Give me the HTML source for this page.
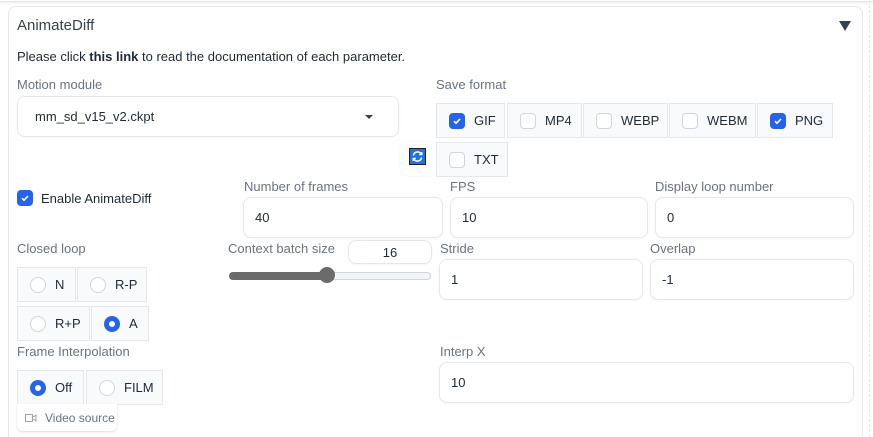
<!DOCTYPE html>
<html style="overflow:hidden;height:437px"><head><style>
*{box-sizing:border-box;margin:0;padding:0}
body{width:873px;height:437px;background:#fff;font-family:"Liberation Sans",sans-serif;position:relative;overflow:hidden;color:#1f2937}
.a{position:absolute}
.lbl{position:absolute;font-size:13px;color:#6b7280;white-space:nowrap}
.inp{position:absolute;border:1px solid #e5e7eb;border-radius:8px;background:#fff;font-size:13px;color:#1f2937;padding-left:11px;display:flex;align-items:center;box-shadow:0 1px 2px rgba(0,0,0,.04)}
.opt{position:absolute;border:1px solid #e5e7eb;background:#f9fafb;font-size:13px;display:flex;align-items:center;padding-left:12px;color:#1f2937}
.cb{width:16px;height:16px;border:1px solid #d1d5db;border-radius:4px;background:#fff;margin-right:9px;flex:none;display:inline-flex;align-items:center;justify-content:center}
.cb.on{background:#2563eb;border-color:#2563eb}
.rd{width:16px;height:16px;border:1px solid #d1d5db;border-radius:50%;background:#fff;margin-right:9px;flex:none}
.rd.on{border:5px solid #2563eb}
</style></head><body>
<div class="a" style="left:0;top:-10px;width:873px;height:12px;border-bottom:1px solid #e5e7eb;box-shadow:0 1px 3px rgba(0,0,0,.08)"></div>
<div class="a" style="left:869px;top:0;width:0;height:437px;border-left:1px dashed #e5e7eb"></div>
<div class="a" style="left:8px;top:6px;width:855px;height:431px;border:1px solid #e5e7eb;border-bottom:none;border-radius:8px 8px 0 0"></div>
<div class="a" style="left:17px;top:17px;font-size:15px;color:#374151">AnimateDiff</div>
<div class="a" style="left:839px;top:21px;width:0;height:0;border-left:6px solid transparent;border-right:6px solid transparent;border-top:10px solid #374151"></div>
<div class="a" style="left:17px;top:49px;font-size:13px;color:#1f2937">Please click <b>this link</b> to read the documentation of each parameter.</div>

<div class="lbl" style="left:17px;top:77px">Motion module</div>
<div class="inp" style="left:17px;top:96px;width:382px;height:41px;padding-left:17px">mm_sd_v15_v2.ckpt</div>
<div class="a" style="left:365px;top:115px;width:0;height:0;border-left:4px solid transparent;border-right:4px solid transparent;border-top:4px solid #374151"></div>

<div class="a" style="left:400px;top:142px;width:36px;height:34px;background:#fff;border-radius:8px;box-shadow:0 0 2px rgba(0,0,0,.06)"></div>
<div class="a" style="left:409px;top:148px;width:17px;height:17px;background:#1a73e8;border:1px solid #222"><svg width="15" height="15" viewBox="0 0 15 15"><path d="M3.5 6.5a4 4 0 0 1 7.5-1.5M11.5 8.5a4 4 0 0 1-7.5 1.5" stroke="#fff" stroke-width="1.5" fill="none"/><path d="M11.8 3v2.6H9.2M3.2 12V9.4h2.6" stroke="#fff" stroke-width="1.3" fill="none"/></svg></div>

<div class="lbl" style="left:436px;top:77px">Save format</div>
<div class="opt" style="left:436px;top:103px;width:69px;height:35px"><span class="cb on"><svg width="10" height="10" viewBox="0 0 10 10"><path d="M2 5.2l2 2 4-4.2" stroke="#fff" stroke-width="1.6" fill="none"/></svg></span>GIF</div>
<div class="opt" style="left:507px;top:103px;width:75px;height:35px"><span class="cb"></span>MP4</div>
<div class="opt" style="left:583px;top:103px;width:85px;height:35px"><span class="cb"></span>WEBP</div>
<div class="opt" style="left:669px;top:103px;width:87px;height:35px"><span class="cb"></span>WEBM</div>
<div class="opt" style="left:757px;top:103px;width:76px;height:35px"><span class="cb on"><svg width="10" height="10" viewBox="0 0 10 10"><path d="M2 5.2l2 2 4-4.2" stroke="#fff" stroke-width="1.6" fill="none"/></svg></span>PNG</div>
<div class="opt" style="left:436px;top:142px;width:72px;height:35px"><span class="cb"></span>TXT</div>

<div class="a" style="left:17px;top:190px;display:flex;align-items:center;font-size:13px"><span class="cb on" style="margin-right:8px"><svg width="10" height="10" viewBox="0 0 10 10"><path d="M2 5.2l2 2 4-4.2" stroke="#fff" stroke-width="1.6" fill="none"/></svg></span>Enable AnimateDiff</div>

<div class="lbl" style="left:244px;top:179px">Number of frames</div>
<div class="inp" style="left:243px;top:197px;width:200px;height:41px">40</div>
<div class="lbl" style="left:450px;top:179px">FPS</div>
<div class="inp" style="left:450px;top:197px;width:198px;height:41px">10</div>
<div class="lbl" style="left:655px;top:179px">Display loop number</div>
<div class="inp" style="left:655px;top:197px;width:199px;height:41px">0</div>

<div class="lbl" style="left:17px;top:241px">Closed loop</div>
<div class="opt" style="left:17px;top:267px;width:59px;height:35px"><span class="rd"></span>N</div>
<div class="opt" style="left:77px;top:267px;width:70px;height:35px"><span class="rd"></span>R-P</div>
<div class="opt" style="left:17px;top:306px;width:73px;height:35px"><span class="rd"></span>R+P</div>
<div class="opt" style="left:91px;top:306px;width:58px;height:35px"><span class="rd on"></span>A</div>

<div class="lbl" style="left:228px;top:241px">Context batch size</div>
<div class="inp" style="left:348px;top:240px;width:84px;height:24px;justify-content:center;padding:0">16</div>
<div class="a" style="left:229px;top:272px;width:202px;height:8px;border-radius:4px;background:#f3f4f6;border:1px solid #d1d5db"></div>
<div class="a" style="left:229px;top:272px;width:99px;height:8px;border-radius:4px;background:#6b6b6b"></div>
<div class="a" style="left:319px;top:267px;width:16px;height:16px;border-radius:50%;background:#6b6b6b"></div>

<div class="lbl" style="left:440px;top:241px">Stride</div>
<div class="inp" style="left:439px;top:259px;width:204px;height:41px">1</div>
<div class="lbl" style="left:650px;top:241px">Overlap</div>
<div class="inp" style="left:650px;top:259px;width:204px;height:41px">-1</div>

<div class="lbl" style="left:17px;top:344px">Frame Interpolation</div>
<div class="opt" style="left:17px;top:370px;width:67px;height:35px"><span class="rd on"></span>Off</div>
<div class="opt" style="left:86px;top:370px;width:77px;height:35px"><span class="rd"></span>FILM</div>
<div class="a" style="left:17px;top:404px;width:100px;height:27px;background:#fff;border-radius:0 0 6px 6px;box-shadow:0 1px 2px rgba(0,0,0,.15);font-size:12px;color:#6b7280;display:flex;align-items:center;padding-left:8px"><svg width="12" height="10" viewBox="0 0 12 10" style="margin-right:8px"><rect x="0.5" y="1.5" width="7" height="7" fill="none" stroke="#9ca3af"/><path d="M8 4l3-2v6l-3-2" fill="none" stroke="#9ca3af"/></svg>Video source</div>

<div class="lbl" style="left:440px;top:344px">Interp X</div>
<div class="inp" style="left:439px;top:362px;width:415px;height:41px">10</div>
</body></html>
